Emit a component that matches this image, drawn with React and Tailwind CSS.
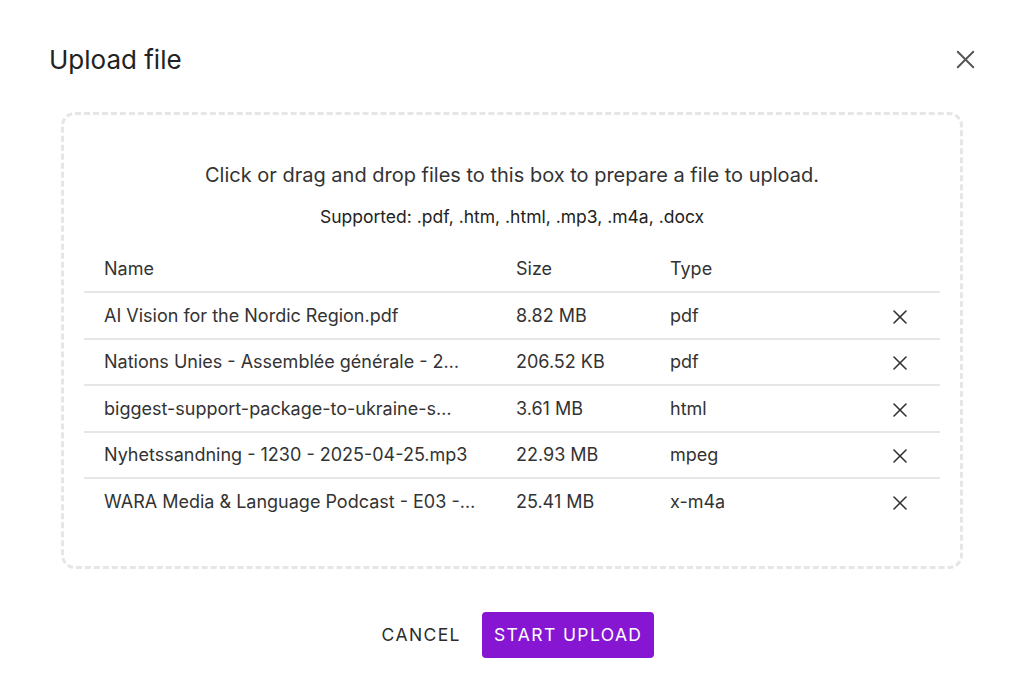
import { X } from 'lucide-react'

const files = [
  { name: 'AI Vision for the Nordic Region.pdf', size: '8.82 MB', type: 'pdf' },
  { name: 'Nations Unies - Assemblée générale - 2…', size: '206.52 KB', type: 'pdf' },
  { name: 'biggest-support-package-to-ukraine-s…', size: '3.61 MB', type: 'html' },
  { name: 'Nyhetssandning - 1230 - 2025-04-25.mp3', size: '22.93 MB', type: 'mpeg' },
  { name: 'WARA Media & Language Podcast - E03 -…', size: '25.41 MB', type: 'x-m4a' },
]

export default function App() {
  return (
    <div className="w-[1024px] h-[693px] bg-white text-[#2b2b2b]" style={{ fontFamily: 'Inter, "Noto Sans", sans-serif' }}>
      <div className="flex justify-between pl-[49px] pr-[43px] pt-[44px] h-[90px] items-start">
        <h1 className="text-[26px] leading-[32px] font-normal text-[#222]">Upload file</h1>
        <button className="text-[#555]">
          <X size={31} strokeWidth={1.5} />
        </button>
      </div>

      <div className="mx-[61px] mt-[22px] h-[457px] rounded-[14px] border-[3px] border-dashed border-[#e6e6e6] px-[20px] pt-[46px]">
        <p className="text-center text-[20px] leading-[28px] text-[#333]">
          Click or drag and drop files to this box to prepare a file to upload.
        </p>
        <p className="text-center text-[17.5px] leading-[24px] mt-[16px] text-[#222]">
          Supported: .pdf, .htm, .html, .mp3, .m4a, .docx
        </p>

        <table className="w-full mt-[12px] table-fixed text-[18px] text-[#333]">
          <colgroup>
            <col className="w-[412px]" />
            <col className="w-[154px]" />
            <col className="w-[200px]" />
            <col />
          </colgroup>
          <thead>
            <tr className="border-b-2 border-[#e6e6e6] h-[51px]">
              <th className="text-left font-normal pl-[20px] pt-[4px]">Name</th>
              <th className="text-left font-normal pl-[20px] pt-[4px]">Size</th>
              <th className="text-left font-normal pl-[20px] pt-[4px]">Type</th>
              <th />
            </tr>
          </thead>
          <tbody>
            {files.map((f, i) => (
              <tr key={f.name} className={'h-[46.5px] ' + (i < files.length - 1 ? 'border-b-2 border-[#e6e6e6]' : '')}>
                <td className="pl-[20px]">
                  <div className="max-w-[380px] whitespace-nowrap">{f.name}</div>
                </td>
                <td className="pl-[20px] whitespace-nowrap">{f.size}</td>
                <td className="pl-[20px]">{f.type}</td>
                <td className="text-right pr-[28px]">
                  <X size={24} strokeWidth={1.6} className="inline-block text-[#333]" />
                </td>
              </tr>
            ))}
          </tbody>
        </table>
      </div>

      <div className="flex justify-center items-center gap-[21px] mt-[43px] pl-[12px]">
        <button className="text-[17.5px] tracking-[0.08em] text-[#2b2b2b]">CANCEL</button>
        <button className="h-[46px] px-[12px] rounded-[4px] bg-[#8716d3] text-white text-[17.5px] tracking-[0.08em]">
          START UPLOAD
        </button>
      </div>
    </div>
  )
}
